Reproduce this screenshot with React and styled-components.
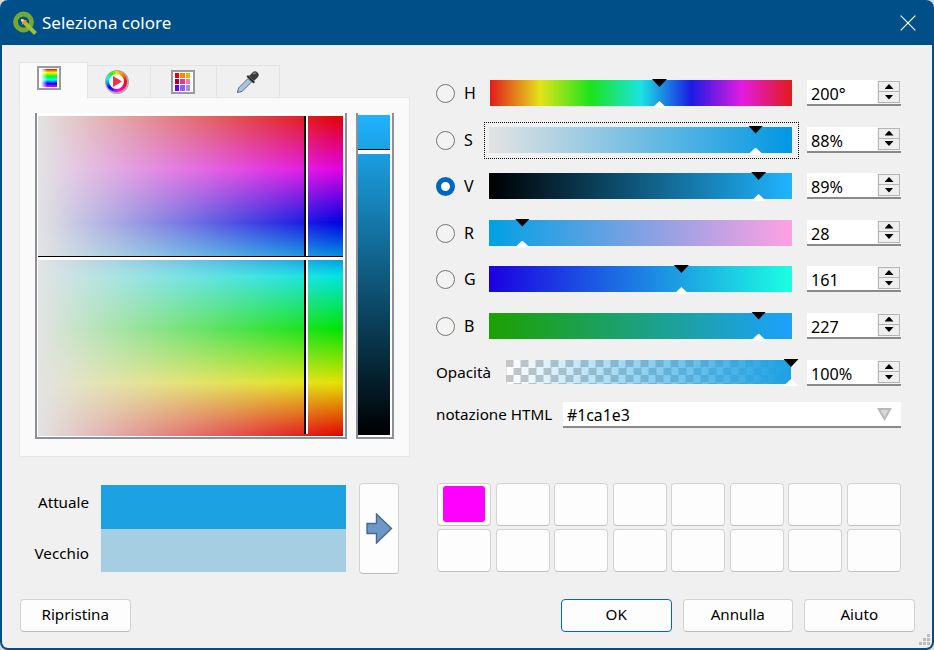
import React from "react";
import styled, { createGlobalStyle } from "styled-components";

const Global = createGlobalStyle`
  html, body { margin: 0; padding: 0; background: #d9d9d9; }
  body { width: 934px; height: 650px; overflow: hidden; font-family: "Noto Sans", "Open Sans", sans-serif; color: #000; }
  * { box-sizing: border-box; }
`;

const Dialog = styled.div`
  width: 934px; height: 650px; display: flex; flex-direction: column;
  border-radius: 8px; overflow: hidden; background: #004f88;
`;
const TitleBar = styled.header`
  height: 45px; flex: none; display: flex; align-items: center; padding: 0 18px 0 13px; color: #fff;
`;
const TitleText = styled.span`
  font-size: 17px; margin-left: 5px; flex: 1; margin-top: -1px;
`;
const Content = styled.main`
  flex: 1; background: #f0f0f0; margin: 0 2px 2px 2px; padding: 17px 17px 0 17px;
  border-radius: 0 0 6px 6px; position: relative; display: flex; flex-direction: column;
`;
const TopSection = styled.section`
  display: flex; gap: 26px; height: 395px; flex: none;
`;
const TabWidget = styled.div`
  width: 391px; display: flex; flex-direction: column;
`;
const TabStrip = styled.div`
  display: flex; align-items: flex-end; height: 35px; flex: none; position: relative; z-index: 1;
`;
const Tab = styled.div`
  width: ${(p) => p.$w}px; height: ${(p) => (p.$active ? 36 : 32)}px; flex: none;
  margin-bottom: ${(p) => (p.$active ? -1 : 0)}px;
  background: ${(p) => (p.$active ? "#fafafa" : "#f0f0f0")};
  border: 1px solid #e4e4e4; border-bottom: none; border-left-width: ${(p) => (p.$active ? 1 : 0)}px;
  display: flex; justify-content: center; align-items: ${(p) => (p.$active ? "flex-start" : "center")};
  padding-top: ${(p) => (p.$active ? 3 : 0)}px; padding-right: ${(p) => p.$shift || 0}px;
`;
const TabPane = styled.div`
  flex: 1; background: #fafafa; border: 1px solid #e6e6e6; padding: 15px 0 0 15px; display: flex; gap: 9px;
  height: 360px;
`;
const BoxFrame = styled.div`
  width: 312px; height: 326px; flex: none; border: 2px solid #8c9097; border-top: none; background: #fff;
  padding: 3px 2px 1px 1px;
`;
const ColorBox = styled.div`
  width: 100%; height: 100%; position: relative; overflow: hidden;
  background:
    linear-gradient(to right, rgb(227,227,227), rgba(227,227,227,0)),
    linear-gradient(to bottom, rgb(227,0,0), rgb(227,0,227) 16.67%, rgb(0,0,227) 33.33%, rgb(0,227,227) 50%, rgb(0,227,0) 66.67%, rgb(227,227,0) 83.33%, rgb(227,0,0));
`;
const CrossV = styled.i`
  position: absolute; top: 0; bottom: 2px; left: 266px; width: 4px;
  border-left: 2px solid #000; background: #fff;
`;
const CrossH = styled.i`
  position: absolute; left: 0; right: 0; top: 140px; height: 4px; background: #fff; border-top: 1.5px solid #000;
`;
const ValueFrame = styled.div`
  width: 38px; height: 326px; flex: none; border: 2px solid #8c9097; border-top: none; background: #fff;
  padding: 2px 2px 2px 0;
`;
const ValueBar = styled.div`
  width: 100%; height: 100%; position: relative; background: linear-gradient(to bottom, #1fb4ff, #000);
`;
const ValueMark = styled.i`
  position: absolute; left: 0; right: 0; top: 34px; height: 5px; background: #fff; border-top: 1.5px solid #000;
`;

const Controls = styled.div`
  width: 465px; padding-top: 18px; display: flex; flex-direction: column;
`;
const Rows = styled.div`
  display: flex; flex-direction: column; gap: 20.5px;
`;
const Row = styled.div`
  display: flex; align-items: center; height: 26px;
`;
const Radio = styled.span`
  width: 19px; height: 19px; border-radius: 50%; flex: none; margin: 1px 9px 0 0;
  border: ${(p) => (p.$on ? "5.5px solid #0067c0" : "1.5px solid #757575")};
  background: ${(p) => (p.$on ? "#fff" : "#f3f3f3")};
`;
const Channel = styled.span`
  width: 25px; flex: none; font-size: 16px; line-height: 26px;
`;
const Bar = styled.div`
  width: ${(p) => (p.$inset ? 302 : 303)}px; height: 26px; position: relative; flex: none; margin-right: 15px;
  margin-left: ${(p) => (p.$inset ? 1 : 0)}px;
  align-self: flex-start;
  background: ${(p) => p.$bg};
  ${(p) => p.$focus && `&::before { content: ""; position: absolute; inset: -5px -7px -6px -5px; border: 1px dotted #000; }`}
`;
const OpacityBar = styled(Bar)`
  width: 285px; height: 24px; margin-right: 16px;
  background:
    linear-gradient(to right, rgba(28,161,227,0), #1ca1e3),
    repeating-conic-gradient(#c6c6c6 0 25%, #ffffff 0 50%) 7.5px 0 / 15px 15px;
`;
const MarkDown = styled.i`
  position: absolute; top: -1px; width: 15px; height: 8px; margin-left: -7.5px; background: #000;
  clip-path: polygon(0 0, 100% 0, 50% 100%);
`;
const MarkUp = styled.i`
  position: absolute; bottom: -2px; width: 15px; height: 7px; margin-left: -7.5px; background: #fff;
  clip-path: polygon(50% 0, 100% 100%, 0 100%);
`;
const Spin = styled.div`
  width: 94px; height: 26px; display: flex; flex: none; border-bottom: 2px solid #8a8a8a; background: #f3f3f3;
`;
const SpinValue = styled.span`
  flex: 1; background: #fff; font-size: 16.2px; line-height: 26px; padding: 1px 0 0 4px;
`;
const SpinButtons = styled.div`
  width: 24px; padding: 1px 1px 0 1px; display: flex; flex-direction: column;
`;
const SpinButton = styled.div`
  height: 11px; border: 1.5px solid #b4b4b4; background: #efefef; display: flex; align-items: center; justify-content: center;
  & + & { border-top: none; }
  &::after {
    content: ""; width: 9px; height: 5px; background: #000;
    clip-path: ${(p) => (p.$up ? "polygon(50% 0, 100% 100%, 0 100%)" : "polygon(0 0, 100% 0, 50% 100%)")};
  }
`;
const FieldLabel = styled.span`
  width: ${(p) => p.$w}px; flex: none; font-size: 15.2px; line-height: 26px; margin-top: -2px;
`;
const OpacityRow = styled(Row)`
  margin-top: 21.5px;
`;
const HtmlRow = styled(Row)`
  margin-top: 16px;
`;
const Combo = styled.div`
  width: 338px; height: 26px; flex: none; background: #fff; border-bottom: 2px solid #8a8a8a;
  display: flex; align-items: center; justify-content: space-between; padding: 1px 9px 0 4px; font-size: 15.8px;
`;

const BottomSection = styled.section`
  display: flex; margin-top: 26px; flex: none; height: 91px;
`;
const CompareLabels = styled.div`
  width: 70px; height: 73px; margin: 8px 12px 0 0; flex: none; display: flex; flex-direction: column;
  justify-content: space-between; text-align: right; font-size: 15.2px; line-height: 22px;
`;
const Compare = styled.div`
  width: 245px; height: 87px; margin-top: 2px; flex: none; display: flex; flex-direction: column;
`;
const CompareSwatch = styled.div`
  flex: 1; background: ${(p) => p.$c};
`;
const ArrowButton = styled.div`
  width: 40px; height: 91px; margin-left: 13px; flex: none; background: #fdfdfd; border: 1px solid #d2d2d2; border-bottom-color: #bcbcbc;
  border-radius: 4px; display: flex; align-items: center; justify-content: center;
`;
const Swatches = styled.div`
  width: 464px; margin-left: 38px; flex: none; display: grid; grid-template-columns: repeat(8, 1fr);
  grid-template-rows: 42.5px 42.5px; column-gap: 4.2px; row-gap: 3.5px;
`;
const Swatch = styled.div`
  background: #fdfdfd; border: 1px solid #d2d2d2; border-bottom-color: #c0c0c0; border-radius: 4px; padding: 2px 5px 3px 5px;
  &::after {
    content: ""; display: ${(p) => (p.$c ? "block" : "none")}; height: 100%; background: ${(p) => p.$c}; border-radius: 3px;
  }
`;
const Footer = styled.footer`
  display: flex; margin-top: 25px; padding-left: 1px; padding-right: 0; gap: 11px;
`;
const Button = styled.div`
  width: 110.5px; height: 33px; display: flex; align-items: center; justify-content: center; font-size: 15.2px; padding-bottom: 3px;
  background: #fdfdfd; border-radius: 4px; margin-left: ${(p) => p.$ml || 0}px;
  border: ${(p) => (p.$primary ? "1.5px solid #0067c0" : "1px solid #d2d2d2")};
  border-bottom-color: ${(p) => (p.$primary ? "#0067c0" : "#bcbcbc")};
`;
const Grip = styled.svg`
  position: absolute; right: 1px; bottom: 1px;
`;

const Framed = styled.div`
  width: ${(p) => p.$w || 24}px; height: ${(p) => p.$h || 24}px; border: 2px solid #9b9b9b; background: #fff; padding: 1px 2px;
`;
const Rainbow = styled.div`
  width: 100%; height: 100%;
  background:
    linear-gradient(to right, #fff, rgba(255,255,255,0) 40%),
    linear-gradient(to bottom, #f00, #ff0 20%, #0f0 40%, #0ff 60%, #00f 80%, #f0f);
`;
const Wheel = styled.div`
  width: 24px; height: 24px; border-radius: 50%; padding: 1.5px; background: #a8a8a8;
`;
const WheelRing = styled.div`
  width: 100%; height: 100%; border-radius: 50%; padding: 3px;
  background: conic-gradient(#e8e800, #ff8000 40deg, #f00 90deg, #f0f 170deg, #00f 230deg, #0ff 285deg, #0f0 330deg, #e8e800);
`;
const WheelHub = styled.div`
  width: 100%; height: 100%; border-radius: 50%; background: #fff; display: flex; align-items: center; justify-content: center;
  &::after {
    content: ""; width: 9px; height: 11px; margin-left: 2px; background: #ee3348;
    clip-path: polygon(0 0, 100% 50%, 0 100%);
  }
`;
const PaletteGrid = styled.div`
  width: 100%; height: 100%; display: grid; grid-template-columns: repeat(3, 1fr); grid-template-rows: repeat(3, 1fr); gap: 1px;
`;
const PaletteCell = styled.div`
  background: ${(p) => p.$c};
`;

const QgisLogo = () => (
  <svg width="24" height="24" viewBox="0 0 24 24">
    <circle cx="10.5" cy="11" r="8" fill="none" stroke="#76a82f" strokeWidth="4.8" />
    <path d="M12 12 L22.5 22.5" stroke="#9ac240" strokeWidth="4" />
    <path d="M8 8 L14 9.5 L12.5 11 L15 13.5 L13.5 15 L11 12.5 L9.5 14 Z" fill="#f39a2b" />
    <path d="M8 8 L11 8.8 L8.8 11 Z" fill="#fff3d8" />
  </svg>
);
const CloseIcon = () => (
  <svg width="16" height="16" viewBox="0 0 16 16">
    <path d="M.7.7 L15.3 15.3 M15.3.7 L.7 15.3" stroke="#fff" strokeWidth="1.2" fill="none" />
  </svg>
);
const Dropper = () => (
  <svg width="24" height="24" viewBox="0 0 24 24">
    <path d="M1.5 22.5 L2.5 18 L12 8.5 L15.5 12 L6 21.5 Z" fill="#a9c4dc" stroke="#5b6a78" strokeWidth="1" />
    <path d="M10.5 6.5 L17.5 13.5 L19 12 L12 5 Z" fill="#2a2a2a" />
    <path d="M13 6 L16.5 2.5 Q19 0 21.5 2.5 Q24 5 21.5 7.5 L18 11 Z" fill="#3c3c3c" />
    <path d="M17 4 Q18.5 2.6 20 3.2" stroke="#8a8a8a" strokeWidth="1.2" fill="none" />
  </svg>
);
const Arrow = () => (
  <svg width="27" height="31" viewBox="0 0 27 31">
    <path d="M1 10.5 H10.5 V1 L25.5 15.5 L10.5 30 V20.5 H1 Z" fill="#6c97c8" stroke="#4a6a8c" strokeWidth="1.4" />
  </svg>
);
const ComboArrow = () => (
  <svg width="15" height="13" viewBox="0 0 15 13">
    <path d="M0 0 H15 L7.5 13 Z" fill="#b9b9b9" />
    <path d="M3.5 2 H11.5 L7.5 9 Z" fill="#d8d8d8" />
  </svg>
);

const SpinBox = ({ value }) => (
  <Spin>
    <SpinValue>{value}</SpinValue>
    <SpinButtons>
      <SpinButton $up />
      <SpinButton />
    </SpinButtons>
  </Spin>
);

const hue = "linear-gradient(to right, rgb(227,27,27), rgb(227,227,27) 16.67%, rgb(27,227,27) 33.33%, rgb(27,227,227) 50%, rgb(27,27,227) 66.67%, rgb(227,27,227) 83.33%, rgb(227,27,27))";
const channels = [
  { k: "H", v: "200°", pos: 56.1, bg: hue, inset: true },
  { k: "S", v: "88%", pos: 88, bg: "linear-gradient(to right, rgb(227,227,227), rgb(0,151,227))", focus: true },
  { k: "V", v: "89%", pos: 89, bg: "linear-gradient(to right, #000, rgb(31,180,255))", on: true },
  { k: "R", v: "28", pos: 11, bg: "linear-gradient(to right, rgb(0,161,227), rgb(255,161,227))" },
  { k: "G", v: "161", pos: 63.5, bg: "linear-gradient(to right, rgb(28,0,227), rgb(28,255,227))" },
  { k: "B", v: "227", pos: 89, bg: "linear-gradient(to right, rgb(28,161,0), rgb(28,161,255))" },
];
const palette = ["#e8000b", "#f08c00", "#eeb400", "#a00033", "#e0399a", "#f875b4", "#6f00e0", "#9955ff", "#ab88ee"];

export default function App() {
  return (
    <>
      <Global />
      <Dialog>
        <TitleBar>
          <QgisLogo />
          <TitleText>Seleziona colore</TitleText>
          <CloseIcon />
        </TitleBar>
        <Content>
          <TopSection>
            <TabWidget>
              <TabStrip>
                <Tab $w={69} $active $shift={9}>
                  <Framed><Rainbow /></Framed>
                </Tab>
                <Tab $w={63} $shift={5}>
                  <Wheel><WheelRing><WheelHub /></WheelRing></Wheel>
                </Tab>
                <Tab $w={66} $shift={2}>
                  <Framed>
                    <PaletteGrid>
                      {palette.map((c) => <PaletteCell key={c} $c={c} />)}
                    </PaletteGrid>
                  </Framed>
                </Tab>
                <Tab $w={63}>
                  <Dropper />
                </Tab>
              </TabStrip>
              <TabPane>
                <BoxFrame>
                  <ColorBox>
                    <CrossV />
                    <CrossH />
                  </ColorBox>
                </BoxFrame>
                <ValueFrame>
                  <ValueBar>
                    <ValueMark />
                  </ValueBar>
                </ValueFrame>
              </TabPane>
            </TabWidget>
            <Controls>
              <Rows>
                {channels.map((c) => (
                  <Row key={c.k}>
                    <Radio $on={c.on} />
                    <Channel>{c.k}</Channel>
                    <Bar $bg={c.bg} $focus={c.focus} $inset={c.inset}>
                      <MarkDown style={{ left: `${c.pos}%` }} />
                      <MarkUp style={{ left: `${c.pos}%` }} />
                    </Bar>
                    <SpinBox value={c.v} />
                  </Row>
                ))}
              </Rows>
              <OpacityRow>
                <FieldLabel $w={70}>Opacità</FieldLabel>
                <OpacityBar>
                  <MarkDown style={{ left: "100%" }} />
                  <MarkUp style={{ left: "100%" }} />
                </OpacityBar>
                <SpinBox value="100%" />
              </OpacityRow>
              <HtmlRow>
                <FieldLabel $w={127}>notazione HTML</FieldLabel>
                <Combo>
                  #1ca1e3
                  <ComboArrow />
                </Combo>
              </HtmlRow>
            </Controls>
          </TopSection>
          <BottomSection>
            <CompareLabels>
              <span>Attuale</span>
              <span>Vecchio</span>
            </CompareLabels>
            <Compare>
              <CompareSwatch $c="#1ca1e3" />
              <CompareSwatch $c="#a6cee3" />
            </Compare>
            <ArrowButton><Arrow /></ArrowButton>
            <Swatches>
              {Array.from({ length: 16 }, (_, i) => (
                <Swatch key={i} $c={i === 0 ? "#ff00ff" : undefined} />
              ))}
            </Swatches>
          </BottomSection>
          <Footer>
            <Button>Ripristina</Button>
            <Button $primary $ml={419.5}>OK</Button>
            <Button>Annulla</Button>
            <Button>Aiuto</Button>
          </Footer>
          <Grip width="13" height="13" viewBox="0 0 13 13">
            <g fill="#bdbdbd">
              <rect x="9" y="0" width="3" height="3" />
              <rect x="5" y="4" width="3" height="3" />
              <rect x="9" y="4" width="3" height="3" />
              <rect x="1" y="8" width="3" height="3" />
              <rect x="5" y="8" width="3" height="3" />
              <rect x="9" y="8" width="3" height="3" />
            </g>
          </Grip>
        </Content>
      </Dialog>
    </>
  );
}
